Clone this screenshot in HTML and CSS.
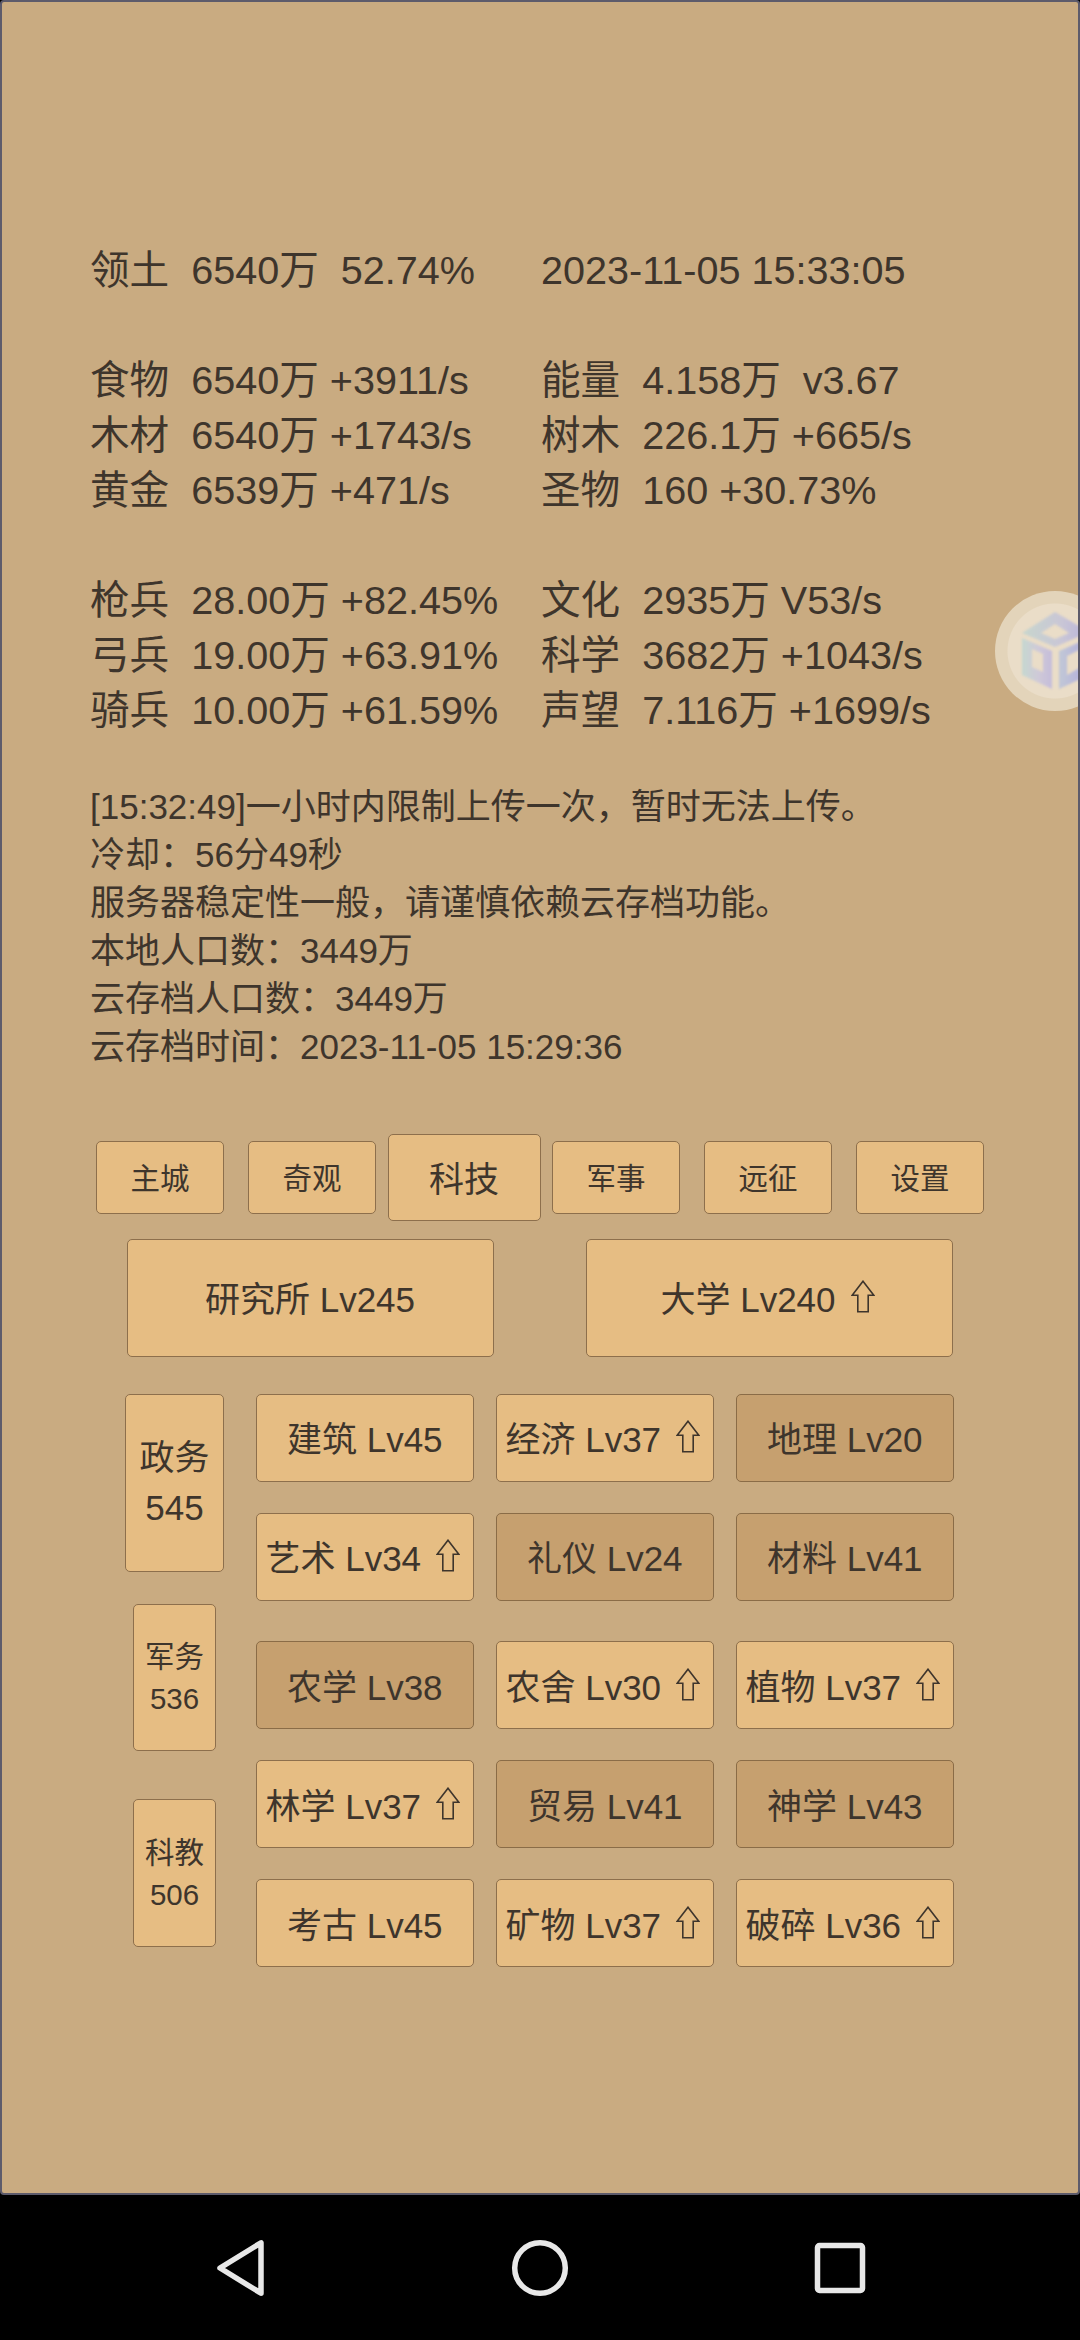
FILE: index.html
```html
<!DOCTYPE html>
<html lang="zh-CN">
<head>
<meta charset="utf-8">
<title>科技</title>
<link rel="stylesheet" href="styles.css">
</head>
<body>
<svg class="sprite" width="0" height="0" aria-hidden="true">
  <symbol id="up-arrow" viewBox="0 0 24 33">
    <path d="M12 1.2 L22.8 15.2 L17.2 15.2 L17.2 31.8 L6.8 31.8 L6.8 15.2 L1.2 15.2 Z" fill="none" stroke="#3e352c" stroke-width="1.6" stroke-linejoin="miter"/>
  </symbol>
</svg>
<div class="screen">
  <main class="panel">
    <section class="stats">
      <div class="stat">领土  6540万  52.74%</div><div class="stat">2023-11-05 15:33:05</div>
      <div class="stat blank"></div><div class="stat blank"></div>
      <div class="stat">食物  6540万 +3911/s</div><div class="stat">能量  4.158万  v3.67</div>
      <div class="stat">木材  6540万 +1743/s</div><div class="stat">树木  226.1万 +665/s</div>
      <div class="stat">黄金  6539万 +471/s</div><div class="stat">圣物  160 +30.73%</div>
      <div class="stat blank"></div><div class="stat blank"></div>
      <div class="stat">枪兵  28.00万 +82.45%</div><div class="stat">文化  2935万 V53/s</div>
      <div class="stat">弓兵  19.00万 +63.91%</div><div class="stat">科学  3682万 +1043/s</div>
      <div class="stat">骑兵  10.00万 +61.59%</div><div class="stat">声望  7.116万 +1699/s</div>
    </section>
    <section class="log">
      <p>[15:32:49]一小时内限制上传一次，暂时无法上传。</p>
      <p>冷却：56分49秒</p>
      <p>服务器稳定性一般，请谨慎依赖云存档功能。</p>
      <p>本地人口数：3449万</p>
      <p>云存档人口数：3449万</p>
      <p>云存档时间：2023-11-05 15:29:36</p>
    </section>
    <nav class="tabs">
      <button class="btn tab">主城</button>
      <button class="btn tab">奇观</button>
      <button class="btn tab active">科技</button>
      <button class="btn tab">军事</button>
      <button class="btn tab">远征</button>
      <button class="btn tab">设置</button>
    </nav>
    <section class="majors">
      <button class="btn major">研究所 Lv245</button>
      <button class="btn major">大学 Lv240<svg class="up"><use href="#up-arrow"/></svg></button>
    </section>
    <section class="tree">
      <div class="side">
        <button class="btn cat cat-main">政务<br>545</button>
        <button class="btn cat cat-mil">军务<br>536</button>
        <button class="btn cat cat-sci">科教<br>506</button>
      </div>
      <div class="techs">
        <div class="tech-group">
          <button class="btn tech">建筑 Lv45</button>
          <button class="btn tech">经济 Lv37<svg class="up"><use href="#up-arrow"/></svg></button>
          <button class="btn tech dim">地理 Lv20</button>
          <button class="btn tech">艺术 Lv34<svg class="up"><use href="#up-arrow"/></svg></button>
          <button class="btn tech dim">礼仪 Lv24</button>
          <button class="btn tech dim">材料 Lv41</button>
        </div>
        <div class="tech-group">
          <button class="btn tech dim">农学 Lv38</button>
          <button class="btn tech">农舍 Lv30<svg class="up"><use href="#up-arrow"/></svg></button>
          <button class="btn tech">植物 Lv37<svg class="up"><use href="#up-arrow"/></svg></button>
          <button class="btn tech">林学 Lv37<svg class="up"><use href="#up-arrow"/></svg></button>
          <button class="btn tech dim">贸易 Lv41</button>
          <button class="btn tech dim">神学 Lv43</button>
          <button class="btn tech">考古 Lv45</button>
          <button class="btn tech">矿物 Lv37<svg class="up"><use href="#up-arrow"/></svg></button>
          <button class="btn tech">破碎 Lv36<svg class="up"><use href="#up-arrow"/></svg></button>
        </div>
      </div>
    </section>
    <div class="ball">
      <svg class="cube" viewBox="0 0 120 120" width="120" height="120" aria-hidden="true">
        <defs>
          <linearGradient id="faceTop" x1="0" y1="0" x2="1" y2="0">
            <stop offset="0" stop-color="#c8d6cd"/><stop offset="0.6" stop-color="#c9c6d6"/><stop offset="1" stop-color="#b8b3da"/>
          </linearGradient>
          <linearGradient id="faceLeft" x1="0" y1="0" x2="1" y2="0">
            <stop offset="0" stop-color="#c6d8d0"/><stop offset="0.55" stop-color="#cfc9d8"/><stop offset="1" stop-color="#c5bdda"/>
          </linearGradient>
          <linearGradient id="faceRight" x1="0" y1="0" x2="1" y2="0">
            <stop offset="0" stop-color="#c2c8d6"/><stop offset="1" stop-color="#b0acdc"/>
          </linearGradient>
        </defs>
        <path fill="url(#faceTop)" fill-rule="evenodd" d="M60 21 L94 41 L60 56 L27 42 Z M60 33 L46 42 L60 48 L74 42 Z"/>
        <path fill="url(#faceLeft)" fill-rule="evenodd" d="M27 47 L57 60 L57 98 L27 84 Z M37 58 L37 76 L48 81 L48 63 Z"/>
        <path fill="url(#faceRight)" fill-rule="evenodd" d="M64 60 L94 47 L94 84 L64 98 Z M72 65 L72 84 L86 76 L86 58 Z"/>
      </svg>
    </div>
  </main>
  <footer class="navbar">
    <svg class="nav-icon" width="80" height="80" viewBox="0 0 80 80" aria-hidden="true">
      <path d="M61 14.8 L61 65.2 L20 40 Z" class="nav-stroke"/>
    </svg>
    <svg class="nav-icon" width="80" height="80" viewBox="0 0 80 80" aria-hidden="true">
      <circle cx="40" cy="40" r="25.3" class="nav-stroke"/>
    </svg>
    <svg class="nav-icon" width="80" height="80" viewBox="0 0 80 80" aria-hidden="true">
      <rect x="17.5" y="17.5" width="45" height="45" rx="2" class="nav-stroke"/>
    </svg>
  </footer>
</div>
</body>
</html>
```
FILE: styles.css
```css
* { box-sizing: border-box; }
html, body { margin: 0; padding: 0; background: #000; }
body {
  font-family: "Liberation Sans", "Noto Sans CJK SC", "DejaVu Sans", sans-serif;
  color: #3e352c;
}
.sprite { position: absolute; }
.screen { width: 1080px; height: 2340px; display: flex; flex-direction: column; overflow: hidden; }
.panel {
  position: relative;
  height: 2195px;
  flex: none;
  background: #c9ab81;
  border: 2px solid #5d5b6b;
  border-radius: 4px;
  padding-top: 241px;
  overflow: hidden;
}
.stats {
  display: grid;
  grid-template-columns: 451px 1fr;
  padding-left: 88px;
  font-size: 39.6px;
  line-height: 55px;
}
.stat { white-space: pre; height: 55px; }
.log { margin: 45px 0 0 88px; font-size: 35px; line-height: 48px; }
.log p { margin: 0; white-space: pre; }
.btn {
  font: inherit;
  color: inherit;
  background: #e6bd83;
  border: 1.5px solid #8d6f4c;
  border-radius: 5px;
  padding: 0;
  display: flex;
  align-items: center;
  justify-content: center;
  text-align: center;
  white-space: nowrap;
}
.tabs {
  display: grid;
  grid-template-columns: repeat(6, 152px);
  justify-items: center;
  align-items: center;
  margin: 63px 0 0 82px;
  height: 87px;
}
.tab { width: 127.5px; height: 73px; font-size: 29.5px; padding-bottom: 3px; }
.tab.active { width: 153px; height: 87px; font-size: 35px; padding-bottom: 2px; }
.majors {
  display: flex;
  gap: 92.5px;
  margin: 18px 0 0 124.5px;
}
.major { width: 367px; height: 117.5px; font-size: 35px; padding-bottom: 2px; }
.tree { display: flex; margin: 37.5px 0 0 123px; }
.side { width: 99px; display: flex; flex-direction: column; align-items: center; margin-right: 32px; }
.cat { flex: none; display: block; padding-top: 1px; }
.cat-main { width: 99px; height: 177.5px; font-size: 35px; line-height: 50px; }
.cat-mil, .cat-sci { width: 83px; height: 147.5px; font-size: 29.5px; line-height: 42px; padding-top: 2px; }
.cat-mil { margin-top: 32px; }
.cat-sci { margin-top: 48px; }
.techs { display: flex; flex-direction: column; gap: 40.9px; }
.tech-group {
  display: grid;
  grid-template-columns: repeat(3, 217.5px);
  grid-auto-rows: 87.5px;
  column-gap: 22.5px;
  row-gap: 31.5px;
}
.tech { font-size: 35px; padding-bottom: 2px; }
.dim { background: #c6a06f; border-color: #8a6c47; }
.up { width: 24px; height: 33px; margin-left: 15px; margin-right: 4px; flex: none; }
.ball {
  position: absolute;
  top: 589px;
  left: 993px;
  width: 120px;
  height: 120px;
  border-radius: 50%;
  background: radial-gradient(circle at center, #eaddc8 0, #eaddc8 47px, #e3d4ba 48px);
}
.cube { display: block; filter: blur(0.8px); }
.navbar {
  flex: 1;
  background: #000;
  display: grid;
  grid-template-columns: 300px 300px 300px;
  justify-content: center;
  justify-items: center;
  align-items: center;
}
.nav-icon { display: block; }
.nav-stroke { fill: none; stroke: #e8e8e8; stroke-width: 5.5px; stroke-linejoin: round; }
```
